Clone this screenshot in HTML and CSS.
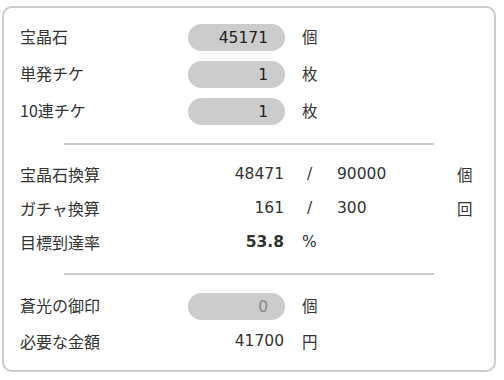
FILE: index.html
```html
<!DOCTYPE html>
<html lang="ja">
<head>
    <meta charset="UTF-8">
    <meta name="viewport" content="width=device-width, initial-scale=1.0">
    <title>宝晶石計算</title>
    <link rel="stylesheet" href="styles.css">
</head>
<body>
    <div class="card">
        <div class="grid inputs">
            <span class="label">宝晶石</span>
            <input class="pill" type="text" value="45171">
            <span class="unit">個</span>

            <span class="label">単発チケ</span>
            <input class="pill" type="text" value="1">
            <span class="unit">枚</span>

            <span class="label">10連チケ</span>
            <input class="pill" type="text" value="1">
            <span class="unit">枚</span>
        </div>

        <hr class="divider">

        <div class="grid results">
            <span class="label">宝晶石換算</span>
            <span class="num">48471</span>
            <span class="slash">/</span>
            <span class="goal">90000</span>
            <span class="end">個</span>

            <span class="label">ガチャ換算</span>
            <span class="num">161</span>
            <span class="slash">/</span>
            <span class="goal">300</span>
            <span class="end">回</span>

            <span class="label">目標到達率</span>
            <span class="num bold">53.8</span>
            <span class="unit">%</span>
        </div>

        <hr class="divider second">

        <div class="grid money">
            <span class="label">蒼光の御印</span>
            <input class="pill" type="text" value="0" disabled>
            <span class="unit">個</span>

            <span class="label">必要な金額</span>
            <span class="num">41700</span>
            <span class="unit">円</span>
        </div>
    </div>
</body>
</html>
```

FILE: styles.css
```css
body {
    margin: 0;
    padding: 0;
    background: white;
    color: #333;
    font-family: "DejaVu Sans", "Noto Sans CJK JP", sans-serif;
    font-size: 15.5px;
}
.card {
    margin: 6px 8px 0 2px;
    padding: 9px 16px 11px 16px;
    border: 2px solid #ccc;
    border-radius: 10px;
}
.grid {
    display: grid;
    grid-template-columns: 168px 97px 52px 120px 1fr;
    align-items: center;
}
.inputs {
    grid-auto-rows: 37px;
}
.results {
    grid-auto-rows: 34px;
}
.money {
    grid-template-rows: 37px 36px;
}
.label {
    grid-column: 1;
    font-family: "Noto Sans CJK JP", sans-serif;
    font-size: 16px;
}
.pill {
    grid-column: 2;
    box-sizing: border-box;
    width: 97px;
    height: 27px;
    margin-top: 4px;
    padding: 0 17px 0 0;
    border: none;
    border-radius: 14px;
    background: #ccc;
    color: #222;
    text-align: right;
    font-family: "DejaVu Sans", sans-serif;
    font-size: 15.5px;
}
.pill:disabled {
    color: #888;
}
.num {
    grid-column: 2;
    text-align: right;
    padding-right: 1px;
}
.bold {
    font-weight: bold;
}
.unit {
    grid-column: 3;
    padding-left: 17px;
    font-family: "DejaVu Sans", "Noto Sans CJK JP", sans-serif;
}
.slash {
    grid-column: 3;
    padding-left: 22px;
}
.goal {
    grid-column: 4;
}
.end {
    grid-column: 5;
    font-family: "Noto Sans CJK JP", sans-serif;
}
.divider {
    width: 370px;
    height: 2px;
    margin: 15px auto 12px auto;
    border: none;
    background: #ccc;
}
.divider.second {
    margin: 14px auto 11px auto;
}
```
